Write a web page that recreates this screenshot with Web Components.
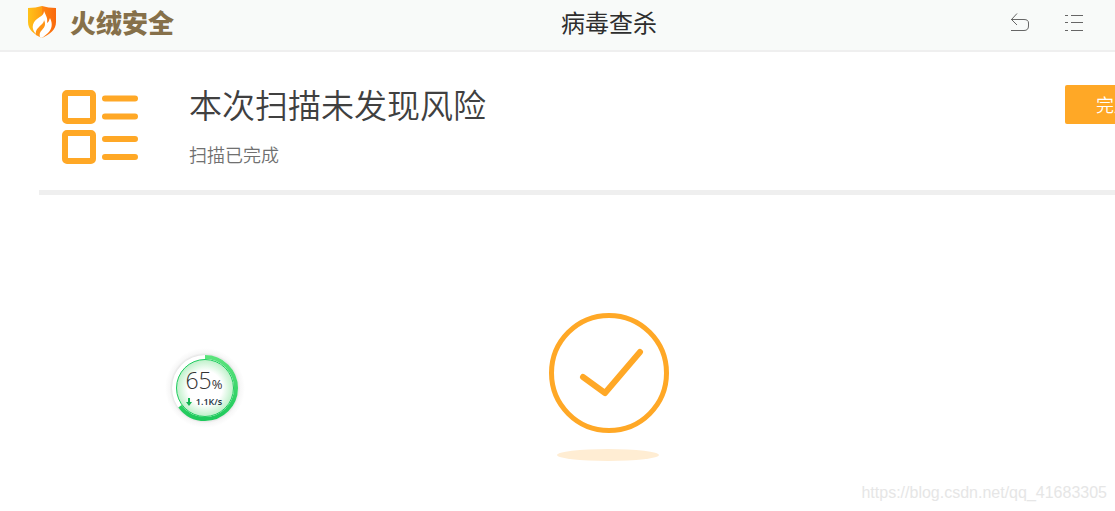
<!DOCTYPE html>
<html lang="zh-CN">
<head>
<meta charset="UTF-8">
<meta name="viewport" content="width=device-width, initial-scale=1">
<title>火绒安全 - 病毒查杀</title>
<style>
  * { box-sizing: border-box; }
  html, body { height: 100%; }
  body {
    margin: 0;
    overflow: hidden;
    position: relative;
    background: #fff;
    color: #404040;
    font-family: "Noto Sans CJK SC", sans-serif;
    --accent: #ffa826;
    --line: #efefef;
  }
</style>
</head>
<body>
<scan-window>
  <app-header slot="header" brand="火绒安全">病毒查杀</app-header>
  <scan-summary slot="summary" action="完成">
    本次扫描未发现风险
    <span slot="status">扫描已完成</span>
  </scan-summary>
  <scan-result></scan-result>
</scan-window>
<speed-ball percent="65" speed="1.1K/s"></speed-ball>
<page-mark>https://blog.csdn.net/qq_41683305</page-mark>

<script>
class ScanWindow extends HTMLElement {
  constructor() {
    super();
    this.shadow = this.attachShadow({ mode: "open" });
    this.shadow.innerHTML = `
      <style>
        /* the window is a little wider than the visible page */
        :host {
          display: flex;
          flex-direction: column;
          width: calc(100% + 103px);
          min-height: 100%;
        }
        main { padding: 0 39px; }
      </style>
      <slot name="header"></slot>
      <main>
        <slot name="summary"></slot>
        <slot></slot>
      </main>
    `;
  }
}

class AppHeader extends HTMLElement {
  constructor() {
    super();
    this.shadow = this.attachShadow({ mode: "open" });
  }

  connectedCallback() {
    this.shadow.innerHTML = `
      <style>
        * { box-sizing: border-box; }
        :host { display: block; }
        header {
          display: grid;
          grid-template-columns: 1fr auto 1fr;
          align-items: center;
          height: 52px;
          padding: 0 26px 6px;
          background: #f8faf9;
          border-bottom: 2px solid var(--line);
        }
        .brand {
          display: flex;
          align-items: center;
          gap: 12px;
          color: #86704a;
          font-size: 26px;
          line-height: 36px;
          font-weight: 900;
        }
        .brand svg, button svg { display: block; }
        h1 {
          margin: 0;
          color: #2e2e2e;
          font-size: 24px;
          line-height: 36px;
          font-weight: 400;
        }
        nav {
          display: flex;
          justify-content: flex-end;
          gap: 30px;
          padding-right: 106px;
        }
        button {
          padding: 0;
          border: 0;
          background: none;
          color: #666;
          cursor: pointer;
        }
      </style>
      <header>
        <div class="brand">
          <svg width="32" height="34" viewBox="0 0 32 34" aria-hidden="true">
            <defs>
              <linearGradient id="shield" x1="0" y1="0" x2="1" y2="0">
                <stop offset="0" stop-color="#ffc21a"/>
                <stop offset="0.5" stop-color="#ff9f12"/>
                <stop offset="0.52" stop-color="#ff8414"/>
                <stop offset="1" stop-color="#f9680d"/>
              </linearGradient>
            </defs>
            <path d="M2 3Q10 3 16 1Q22 3 30 3V17C30 25 24 29 16 33C8 29 2 25 2 17Z" fill="url(#shield)"/>
            <path d="M18 6C20 11 22 13 21 18C23 17 23 15 24 13C27 19 26 24 22 28C20 30 18 31 16 33C13 32 11 30 10 29C5 24 6 18 11 14C15 11 18 10 18 6Z" fill="#fff"/>
            <path d="M10 30C9 25 12 23 15 20C17 18 18 17 18 15C20 19 19 22 16 25C14 27 13 29 14 32Z" fill="#ff9517"/>
          </svg>
          <span>${this.getAttribute("brand")}</span>
        </div>
        <h1><slot></slot></h1>
        <nav>
          <button type="button" aria-label="返回">
            <svg width="24" height="24" viewBox="0 0 24 24" fill="none" stroke="currentColor">
              <path d="M9 3.5L3.5 9.5L9 15M3 9.5H16Q20.5 9.5 20.5 13V16Q20.5 20.5 16 20.5H3"/>
            </svg>
          </button>
          <button type="button" aria-label="菜单">
            <svg width="24" height="24" viewBox="0 0 24 24" fill="none" stroke="currentColor">
              <path d="M3 5.5H6M9 5.5H21M3 12.5H6M9 12.5H21M3 20.5H6M9 20.5H21"/>
            </svg>
          </button>
        </nav>
      </header>
    `;
  }
}

class ScanSummary extends HTMLElement {
  constructor() {
    super();
    this.shadow = this.attachShadow({ mode: "open" });
  }

  connectedCallback() {
    this.shadow.innerHTML = `
      <style>
        * { box-sizing: border-box; }
        :host { display: block; }
        section {
          display: flex;
          align-items: flex-start;
          padding: 26px 16px 21px 20px;
          border-bottom: 5px solid var(--line);
        }
        svg { flex: none; margin: 9px 48px 0 0; }
        .text { flex: 1; }
        h2 {
          margin: 0;
          font-size: 33px;
          line-height: 52px;
          font-weight: 350;
        }
        p {
          margin: 10px 0 0;
          color: #707070;
          font-size: 18px;
          line-height: 28px;
          font-weight: 350;
        }
        button {
          height: 39px;
          margin-top: 7px;
          padding: 0 31px 2px;
          border: 0;
          border-radius: 2px;
          background: var(--accent);
          color: #fff;
          font: inherit;
          font-size: 18px;
          font-weight: 350;
          cursor: pointer;
        }
      </style>
      <section>
        <svg width="82" height="82" viewBox="0 0 82 82" fill="none" stroke="var(--accent)" stroke-width="6" stroke-linecap="round" aria-hidden="true">
          <rect x="6" y="6" width="28" height="28" rx="2"/>
          <rect x="6" y="46" width="28" height="28" rx="2"/>
          <path d="M46 11.5H76M46 29.5H76M46 52H76M46 70H76"/>
        </svg>
        <div class="text">
          <h2><slot></slot></h2>
          <p><slot name="status"></slot></p>
        </div>
        <button type="button">${this.getAttribute("action")}</button>
      </section>
    `;
  }
}

class ScanResult extends HTMLElement {
  constructor() {
    super();
    this.shadow = this.attachShadow({ mode: "open" });
    this.shadow.innerHTML = `
      <style>
        :host {
          display: flex;
          justify-content: center;
          padding-top: 118px;
        }
      </style>
      <svg width="120" height="150" viewBox="0 0 120 150" role="img" aria-label="安全">
        <circle cx="60" cy="60" r="57.5" fill="none" stroke="var(--accent)" stroke-width="5"/>
        <path d="M34 64L56 80L91 39" fill="none" stroke="var(--accent)" stroke-width="6" stroke-linecap="round" stroke-linejoin="round"/>
        <ellipse cx="59" cy="142" rx="51" ry="6" fill="#ffedd3"/>
      </svg>
    `;
  }
}

class SpeedBall extends HTMLElement {
  constructor() {
    super();
    this.shadow = this.attachShadow({ mode: "open" });
  }

  connectedCallback() {
    const percent = Number(this.getAttribute("percent"));
    this.shadow.innerHTML = `
      <style>
        /* floats over the window */
        :host {
          position: absolute;
          left: 165px;
          top: 348px;
          display: grid;
          width: 80px;
          height: 80px;
          color: #333;
        }
        svg, .text { grid-area: 1 / 1; }
        .text {
          display: flex;
          flex-direction: column;
          align-items: center;
          padding: 19px 2px 0 0;
        }
        .percent {
          font-family: "Open Sans", sans-serif;
          font-size: 23px;
          line-height: 26px;
          font-weight: 300;
        }
        small { font-size: 13px; font-weight: 400; }
        .speed {
          display: flex;
          align-items: center;
          gap: 4px;
          font-family: "Open Sans", sans-serif;
          font-size: 9px;
          line-height: 10px;
          font-weight: 600;
          color: #203040;
        }
      </style>
      <svg width="80" height="80" viewBox="0 0 80 80" aria-hidden="true">
        <defs>
          <radialGradient id="halo">
            <stop offset="0.8" stop-color="#dcdcdc"/>
            <stop offset="0.88" stop-color="#f7f7f7"/>
            <stop offset="1" stop-color="#fff"/>
          </radialGradient>
          <radialGradient id="glow">
            <stop offset="0.6" stop-color="#fff"/>
            <stop offset="1" stop-color="#bdf0c8"/>
          </radialGradient>
          <linearGradient id="ring" x1="0" y1="0" x2="1" y2="0">
            <stop offset="0" stop-color="#1ec95b"/>
            <stop offset="1" stop-color="#5be37c"/>
          </linearGradient>
        </defs>
        <circle cx="40" cy="40" r="40" fill="url(#halo)"/>
        <circle cx="40" cy="40" r="33" fill="#fff"/>
        <circle cx="40" cy="40" r="28.5" fill="url(#glow)" stroke="#1dcc5e"/>
        <circle cx="40" cy="40" r="31" fill="none" stroke="url(#ring)" stroke-width="4" pathLength="100" stroke-dasharray="${percent} 100" transform="rotate(-90 40 40)"/>
      </svg>
      <div class="text">
        <div class="percent">${percent}<small>%</small></div>
        <div class="speed">
          <svg width="6" height="8" viewBox="0 0 6 8" aria-hidden="true"><path d="M2 0H4V4H6L3 8L0 4H2Z" fill="#12b552"/></svg>
          <span>${this.getAttribute("speed")}</span>
        </div>
      </div>
    `;
  }
}

class PageMark extends HTMLElement {
  constructor() {
    super();
    this.shadow = this.attachShadow({ mode: "open" });
    this.shadow.innerHTML = `
      <style>
        :host {
          position: absolute;
          right: 8px;
          bottom: 8px;
          color: #e6e6e6;
          font-family: "Liberation Sans", sans-serif;
          font-size: 16px;
          line-height: 20px;
        }
      </style>
      <slot></slot>
    `;
  }
}

customElements.define("scan-window", ScanWindow);
customElements.define("app-header", AppHeader);
customElements.define("scan-summary", ScanSummary);
customElements.define("scan-result", ScanResult);
customElements.define("speed-ball", SpeedBall);
customElements.define("page-mark", PageMark);
</script>
</body>
</html>
